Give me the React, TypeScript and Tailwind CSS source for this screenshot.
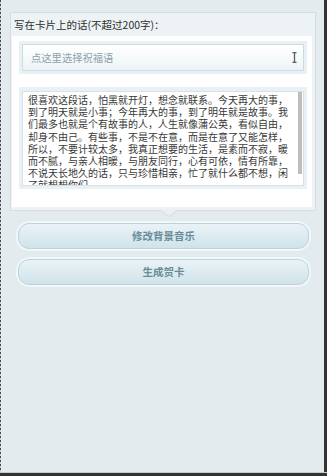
const message =
  "很喜欢这段话，怕黑就开灯，想念就联系。今天再大的事，到了明天就是小事；今年再大的事，到了明年就是故事。我们最多也就是个有故事的人，人生就像蒲公英，看似自由，却身不由己。有些事，不是不在意，而是在意了又能怎样，所以，不要计较太多，我真正想要的生活，是素而不寂，暖而不腻，与亲人相暖，与朋友同行，心有可依，情有所靠，不说天长地久的话，只与珍惜相亲，忙了就什么都不想，闲了就想想你们。";

const font = { fontFamily: '"Noto Sans CJK SC", "Liberation Sans", sans-serif' };

function CardButton({ label }: { label: string }) {
  return (
    <div className="rounded-[13px] bg-[#f1f7f9] p-[2px] shadow-[0_0_1px_#d6e3e8]">
      <button
        type="button"
        className="flex h-[26px] w-full items-center justify-center rounded-[11px] border border-[#bcd3dc] bg-gradient-to-b from-[#e9f3f7] to-[#d0e3ea] text-[10.5px] font-bold text-[#6a8c9a]"
      >
        {label}
      </button>
    </div>
  );
}

export default function App() {
  return (
    <div className="flex h-[476px] w-[327px] flex-col bg-[#333]" style={font}>
      <div className="flex min-h-0 flex-1">
        {/* dashed left edge */}
        <div className="w-px bg-[repeating-linear-gradient(to_bottom,#4a4a4a_0_2px,#c9d1d4_2px_4px)]" />

        <main className="flex-1 bg-[#e3ebee] pt-[12px]">
          {/* Message panel */}
          <div className="relative ml-[9px] mr-[8px] border border-[#d5dde0] bg-[#edf3f5] pb-[3px] pr-[3px]">
            <div className="flex h-[23px] items-center pl-[3px] text-[10.5px] text-[#2e2e2e]">
              写在卡片上的话(不超过200字)：
            </div>

            <div className="ml-px bg-white pb-[18px] pt-[5px]">
              {/* Greeting picker */}
              <div className="ml-[7px] mr-[5px] bg-[#e8f2f6] p-[3px]">
                <div className="flex h-[27px] items-center justify-between border border-[#c9dce3] bg-gradient-to-b from-white to-[#edf4f6] pl-[8px] pr-[6px]">
                  <span className="text-[10.3px] text-[#8ba2ab]">点这里选择祝福语</span>
                  <svg width="5" height="11" viewBox="0 0 5 11" className="text-[#5e5e5e]">
                    <path d="M0.5 0.5H4.5M0.5 10.5H4.5M2.5 0.5V10.5" stroke="currentColor" strokeWidth="1.3" fill="none" />
                  </svg>
                </div>
              </div>

              {/* Message text */}
              <div className="ml-[7px] mr-[5px] mt-[13px] bg-[#e8f2f6] px-[3px] pb-[3px] pt-[4px]">
                <div className="relative h-[95px] overflow-hidden border border-[#d4e2e7] bg-white pl-[5px] pr-[8px] pt-[2px]">
                  <p className="text-[10px] leading-[12.2px] text-[#383838]">{message}</p>
                  <div className="absolute right-[1px] top-0 h-[82px] w-[4px] bg-[#bdbdbd]" />
                </div>
              </div>
            </div>

            {/* pointer */}
            <svg
              width="18"
              height="7"
              viewBox="0 0 18 7"
              className="absolute left-[149px] top-full"
            >
              <polygon points="0,0 18,0 9,6.5" fill="#e9eff2" />
              <polyline points="0,0 9,6.5 18,0" fill="none" stroke="#d5dde0" strokeWidth="1" />
            </svg>
          </div>

          <div className="ml-[15px] mr-[13px] mt-[10px] flex flex-col gap-[6px]">
            <CardButton label="修改背景音乐" />
            <CardButton label="生成贺卡" />
          </div>
        </main>

        <div className="w-[3px] bg-[#333]" />
      </div>
      <div className="h-px bg-[#c5cbce]" />
      <div className="h-[3px] bg-[#333]" />
    </div>
  );
}
